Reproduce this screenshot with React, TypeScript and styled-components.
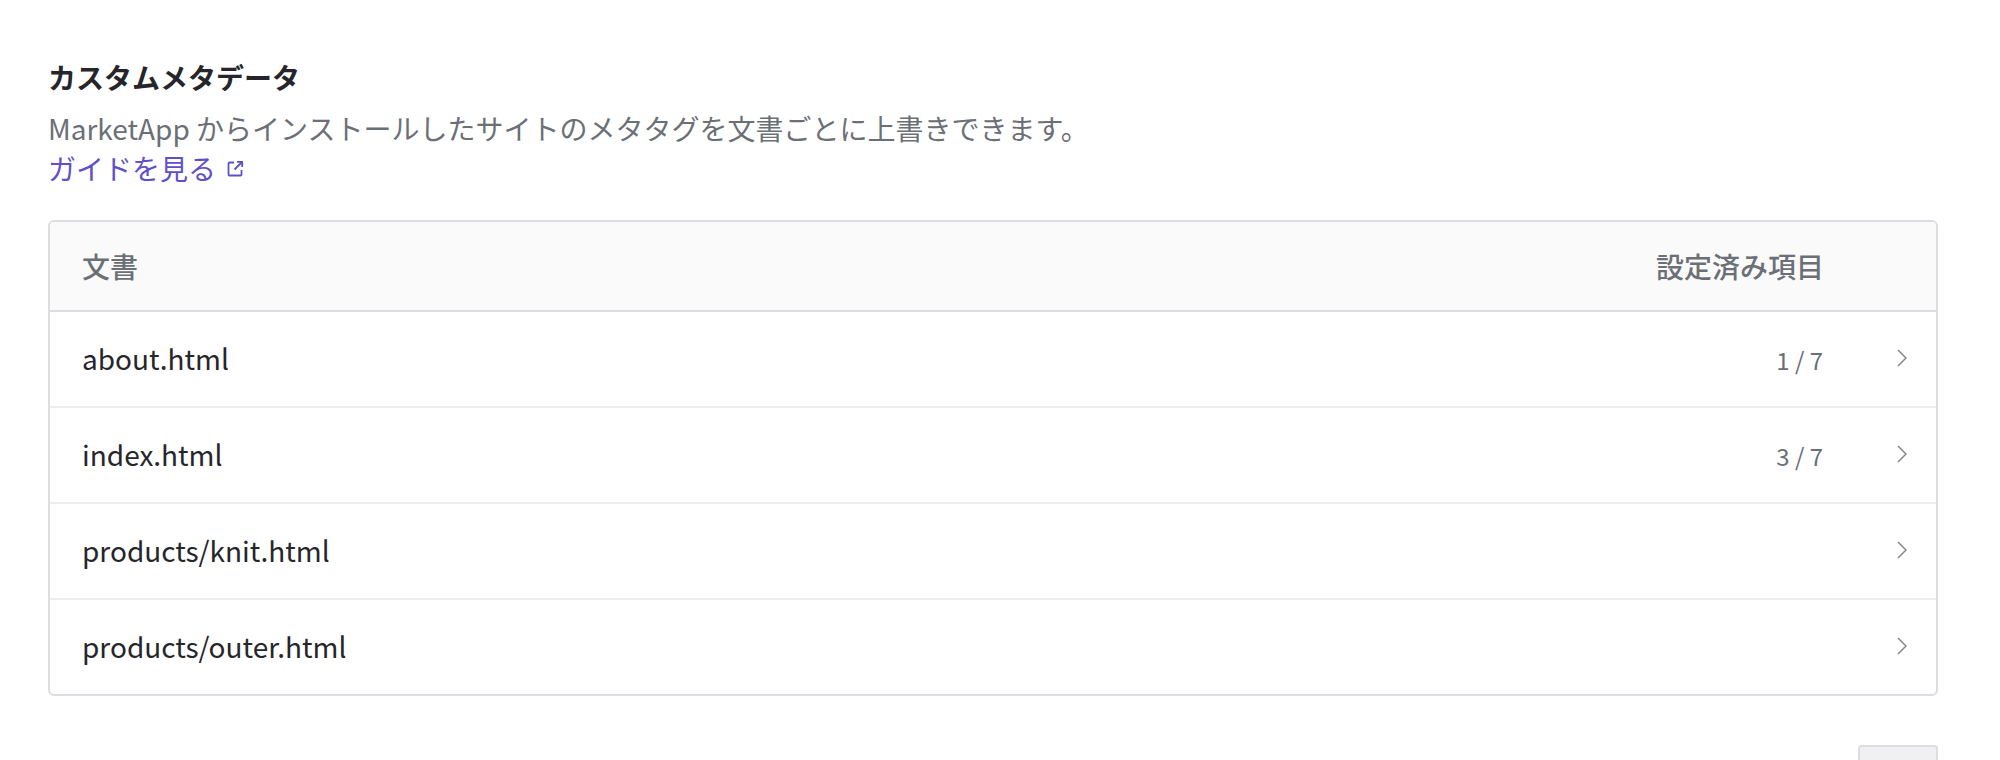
import styled, { createGlobalStyle } from 'styled-components';

const GlobalStyle = createGlobalStyle`
	html, body {
		margin: 0;
		background: #fff;
		font-family: 'Noto Sans CJK JP', 'Noto Sans', sans-serif;
	}
`;

const Page = styled.div`
	box-sizing: border-box;
	padding: 57px 62px 0 48px;
	height: 760px;
	overflow: hidden;
`;

const Title = styled.h2`
	margin: 0 0 11px;
	font-size: 28px;
	line-height: 40px;
	font-weight: 700;
	color: #26262a;
`;

const Description = styled.p`
	margin: 0;
	font-size: 28px;
	line-height: 40px;
	color: #6b6f76;
`;

const GuideLink = styled.a`
	display: inline-flex;
	align-items: center;
	gap: 11px;
	font-size: 28px;
	line-height: 40px;
	color: #5f50c8;
`;

const Table = styled.div`
	margin-top: 32px;
	border: 2px solid #dcdde0;
	border-radius: 6px;
	overflow: hidden;
`;

const HeaderRow = styled.div`
	display: flex;
	align-items: center;
	height: 88px;
	padding: 0 112px 0 32px;
	background: #fafafa;
	border-bottom: 2px solid #dcdde0;
	font-size: 28px;
	font-weight: 500;
	color: #6b6f76;
`;

const Row = styled.div`
	display: flex;
	align-items: center;
	height: 94px;
	padding: 0 29px 0 32px;
	font-size: 28px;
	color: #26262a;
	& + & {
		border-top: 2px solid #eeeef0;
	}
`;

const Name = styled.span`
	flex: 1;
`;

const DocName = styled(Name)`
	margin-bottom: 2px;
`;

const Count = styled.span`
	font-size: 24px;
	color: #6b6f76;
	margin-right: 74px;
`;

const Chevron = styled.svg`
	width: 10px;
	height: 18px;
	margin-bottom: 2px;
`;

const Footer = styled.div`
	display: flex;
	justify-content: flex-end;
	margin-top: 49px;
`;

const FooterButton = styled.button`
	width: 80px;
	height: 56px;
	background: #f0f0f2;
	border: 2px solid #dcdde0;
	border-radius: 4px;
`;

const docs = [
	{ name: 'about.html', count: '1 / 7' },
	{ name: 'index.html', count: '3 / 7' },
	{ name: 'products/knit.html' },
	{ name: 'products/outer.html' },
];

const App = () => (
	<Page>
		<GlobalStyle />
		<Title>カスタムメタデータ</Title>
		<Description>MarketApp からインストールしたサイトのメタタグを文書ごとに上書きできます。</Description>
		<GuideLink>
			ガイドを見る
			<svg width="17" height="17" viewBox="0 0 17 17" fill="none" stroke="currentColor" strokeWidth="1.8">
				<path d="M7 2.5H2.5a1 1 0 0 0-1 1V14.5a1 1 0 0 0 1 1H13.5a1 1 0 0 0 1-1V10" />
				<path d="M7.5 9.5L15 2M10 1.8h5.2V7" />
			</svg>
		</GuideLink>
		<Table>
			<HeaderRow>
				<Name>文書</Name>
				<span>設定済み項目</span>
			</HeaderRow>
			{docs.map((doc) => (
				<Row key={doc.name}>
					<DocName>{doc.name}</DocName>
					{doc.count && <Count>{doc.count}</Count>}
					<Chevron viewBox="0 0 10 18" fill="none" stroke="#85878c" strokeWidth="1.5">
						<path d="M1 1l8 8-8 8" />
					</Chevron>
				</Row>
			))}
		</Table>
		<Footer>
			<FooterButton />
		</Footer>
	</Page>
);

export default App;
